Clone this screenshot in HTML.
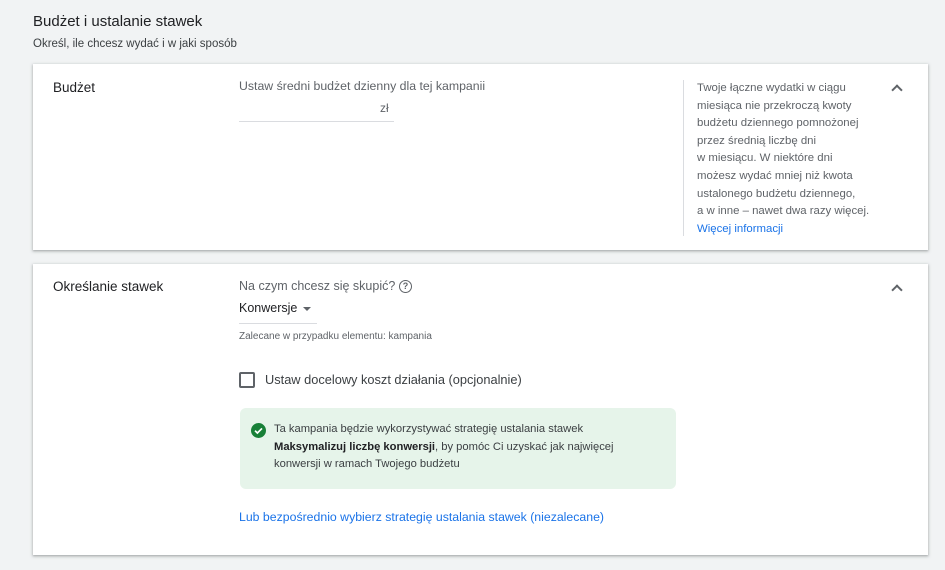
<!DOCTYPE html>
<html><head><meta charset="utf-8"><style>
*{margin:0;padding:0;box-sizing:border-box}
body{width:945px;height:570px;background:#f1f3f4;font-family:"Liberation Sans",Arial,sans-serif;color:#202124;position:relative;overflow:hidden}
.a{position:absolute;white-space:nowrap}
.card{position:absolute;left:33px;width:895px;background:#fff;box-shadow:0 1px 2px rgba(60,64,67,.3),0 1px 3px 1px rgba(60,64,67,.15)}
.chev{position:absolute;width:8px;height:8px;border-left:2px solid #5f6368;border-top:2px solid #5f6368;transform:rotate(45deg)}
</style></head><body>
<div class="a" style="left:33px;top:13px;font-size:15px">Budżet i ustalanie stawek</div>
<div class="a" style="left:33px;top:38px;font-size:11.5px;color:#3c4043">Określ, ile chcesz wydać i w jaki sposób</div>

<div class="card" style="top:64px;height:186px">
  <div class="a" style="left:20px;top:16px;font-size:13.5px">Budżet</div>
  <div class="a" style="left:206px;top:15px;font-size:12.3px;color:#5f6368">Ustaw średni budżet dzienny dla tej kampanii</div>
  <div class="a" style="left:347px;top:37px;font-size:12px;color:#5f6368">zł</div>
  <div class="a" style="left:206px;top:57px;width:155px;height:1px;background:#dadce0"></div>
  <div class="a" style="left:650px;top:16px;width:1px;height:156px;background:#dadce0"></div>
  <div class="a" style="left:664px;top:16px;font-size:11.4px;line-height:17.6px;color:#5f6368">Twoje łączne wydatki w ciągu<br>miesiąca nie przekroczą kwoty<br>budżetu dziennego pomnożonej<br>przez średnią liczbę dni<br>w miesiącu. W niektóre dni<br>możesz wydać mniej niż kwota<br>ustalonego budżetu dziennego,<br>a w inne – nawet dwa razy więcej.<br><span style="color:#1a73e8">Więcej informacji</span></div>
  <div class="chev" style="left:860px;top:22px"></div>
</div>

<div class="card" style="top:264px;height:291px">
  <div class="a" style="left:20px;top:15px;font-size:13.5px">Określanie stawek</div>
  <div class="a" style="left:206px;top:15px;font-size:12.5px;color:#5f6368">Na czym chcesz się skupić?</div>
  <div class="a" style="left:366px;top:16px;width:13px;height:13px;border:1.3px solid #5f6368;border-radius:50%;font-size:9px;line-height:11px;text-align:center;color:#5f6368;font-weight:bold">?</div>
  <div class="a" style="left:206px;top:37px;font-size:12.5px">Konwersje</div>
  <div class="a" style="left:270px;top:43px;width:0;height:0;border-left:4px solid transparent;border-right:4px solid transparent;border-top:4px solid #5f6368"></div>
  <div class="a" style="left:206px;top:59px;width:78px;height:1px;background:#dadce0"></div>
  <div class="a" style="left:206px;top:67px;font-size:10px;color:#5f6368">Zalecane w przypadku elementu: kampania</div>
  <div class="a" style="left:206px;top:108px;width:16px;height:16px;border:2px solid #5f6368;border-radius:2px"></div>
  <div class="a" style="left:232px;top:108px;font-size:12.8px;color:#3c4043">Ustaw docelowy koszt działania (opcjonalnie)</div>
  <div class="a" style="left:207px;top:144px;width:436px;height:81px;background:#e6f4ea;border-radius:6px"></div>
  <svg class="a" style="left:218px;top:159px" width="15" height="15" viewBox="0 0 16 16"><circle cx="8" cy="8" r="8" fill="#188038"/><path d="M4.3 8.2l2.5 2.5 4.9-4.9" stroke="#fff" stroke-width="1.8" fill="none"/></svg>
  <div class="a" style="left:241px;top:157px;font-size:11.2px;line-height:17.5px;color:#3c4043">Ta kampania będzie wykorzystywać strategię ustalania stawek<br><b style="color:#202124">Maksymalizuj liczbę konwersji</b>, by pomóc Ci uzyskać jak najwięcej<br>konwersji w ramach Twojego budżetu</div>
  <div class="a" style="left:206px;top:246px;font-size:12.3px;color:#1a73e8">Lub bezpośrednio wybierz strategię ustalania stawek (niezalecane)</div>
  <div class="chev" style="left:860px;top:22px"></div>
</div>
</body></html>
